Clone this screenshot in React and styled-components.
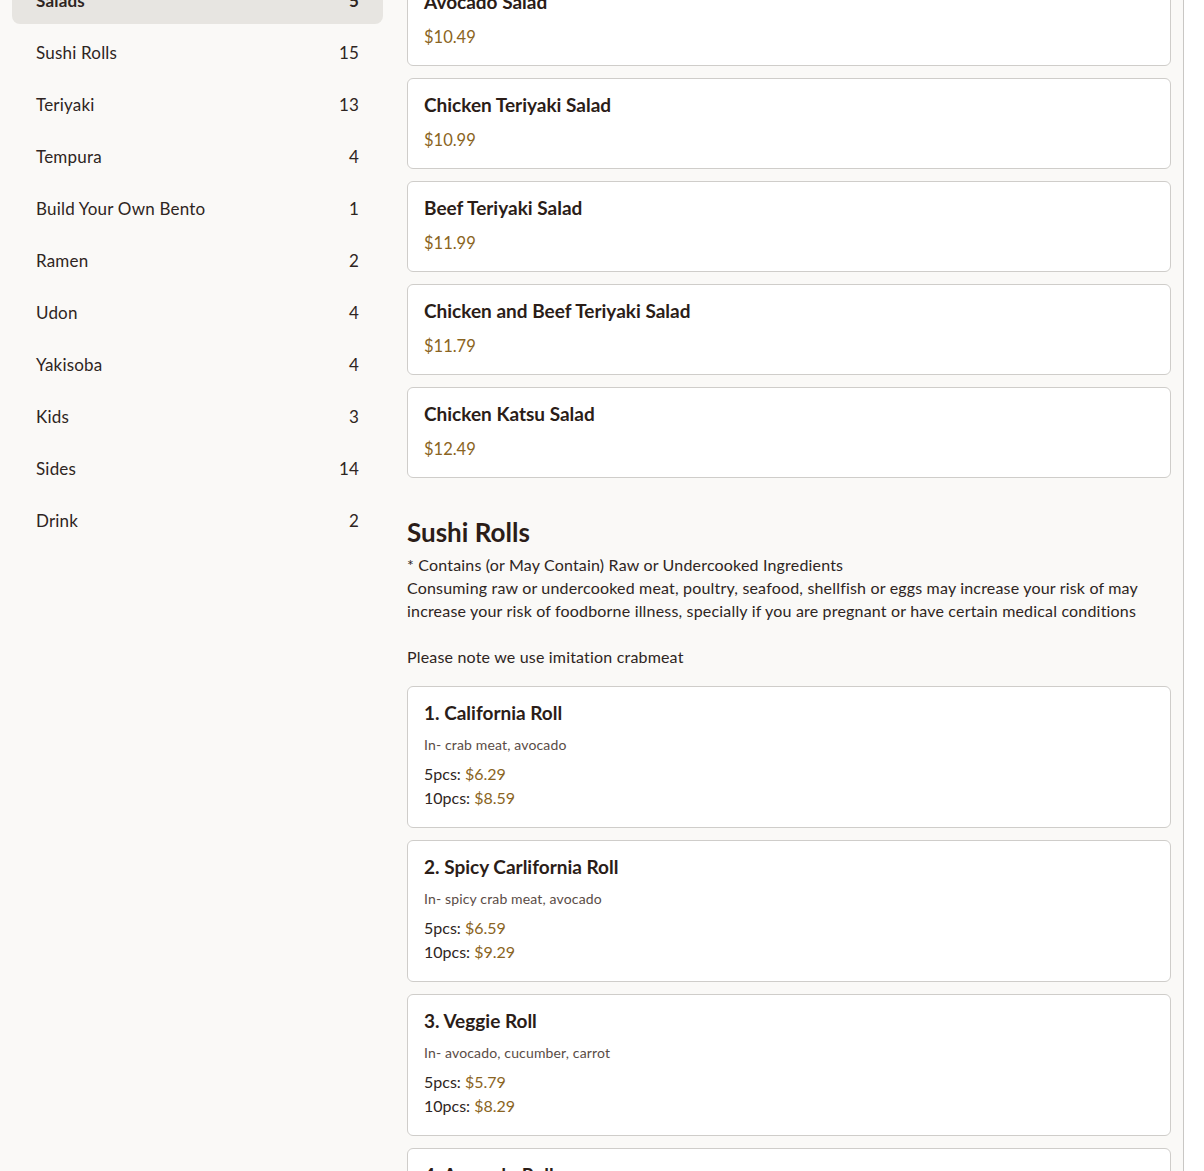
import React from "react";
import styled, { createGlobalStyle } from "styled-components";

const Global = createGlobalStyle`
  html, body { margin: 0; padding: 0; background: #ffffff; }
  body { font-family: "Lato", "Noto Sans", sans-serif; color: #2b211d; overflow: hidden; }
  * { box-sizing: border-box; }
`;

const Page = styled.div`
  width: 1184px;
  height: 1171px;
  overflow: hidden;
  background: #faf9f7;
  border-right: 1px solid #c9c7c4;
`;

const Layout = styled.div`
  display: grid;
  grid-template-columns: 371px 1fr;
  gap: 24px;
  padding: 0 12px 12px 12px;
  margin-top: -24px;
  align-items: start;
`;

const Sidebar = styled.nav`
  display: flex;
  flex-direction: column;
  gap: 4px;
`;

const NavItem = styled.div`
  display: flex;
  align-items: center;
  justify-content: space-between;
  height: 48px;
  padding: 0 24px;
  border-radius: 8px;
  font-size: 17px;
  letter-spacing: 0.2px;
  background: ${(p) => (p.$active ? "#e7e5e1" : "transparent")};
  font-weight: ${(p) => (p.$active ? 700 : 400)};
  color: #2e2522;
`;

const Content = styled.main`
  display: flex;
  flex-direction: column;
  gap: 39px;
  margin-top: -1px;
`;

const Section = styled.section`
  display: flex;
  flex-direction: column;
`;

const SectionTitle = styled.h2`
  margin: 0 0 6px 0;
  font-size: 26px;
  line-height: 30px;
  font-weight: 700;
  color: #2b1d18;
`;

const SectionNote = styled.p`
  margin: 0 0 18px 0;
  font-size: 16px;
  letter-spacing: 0.18px;
  line-height: 23px;
  white-space: pre-line;
  color: #2e2522;
`;

const Cards = styled.div`
  display: flex;
  flex-direction: column;
  gap: 12px;
`;

const Card = styled.div`
  background: #ffffff;
  border: 1px solid #cfcdca;
  border-radius: 6px;
  padding: ${(p) => (p.$tall ? "16px 16px 17px" : "16px")};
  display: flex;
  flex-direction: column;
`;

const ItemName = styled.div`
  font-size: 19px;
  line-height: 22px;
  font-weight: 700;
  color: #2b1d18;
  margin: -1px 0 12px 0;
`;

const ItemDesc = styled.div`
  font-size: 14px;
  letter-spacing: 0.15px;
  line-height: 20px;
  color: #5a4c46;
  margin: -1px 0 7px 0;
`;

const Price = styled.span`
  font-size: 16.5px;
  line-height: 24px;
  color: #8a6422;
`;

const PriceLine = styled.div`
  font-size: 16px;
  line-height: 24px;
  color: #2e2522;

  ${Price} {
    font-size: 16px;
  }
`;

const categories = [
  ["Salads", 5, true],
  ["Sushi Rolls", 15],
  ["Teriyaki", 13],
  ["Tempura", 4],
  ["Build Your Own Bento", 1],
  ["Ramen", 2],
  ["Udon", 4],
  ["Yakisoba", 4],
  ["Kids", 3],
  ["Sides", 14],
  ["Drink", 2],
];

const salads = [
  ["Avocado Salad", "$10.49"],
  ["Chicken Teriyaki Salad", "$10.99"],
  ["Beef Teriyaki Salad", "$11.99"],
  ["Chicken and Beef Teriyaki Salad", "$11.79"],
  ["Chicken Katsu Salad", "$12.49"],
];

const rolls = [
  ["1. California Roll", "In- crab meat, avocado", "$6.29", "$8.59"],
  ["2. Spicy Carlifornia Roll", "In- spicy crab meat, avocado", "$6.59", "$9.29"],
  ["3. Veggie Roll", "In- avocado, cucumber, carrot", "$5.79", "$8.29"],
  ["4. Avocado Roll", "In- avocado", "$5.79", "$8.29"],
];

export default function App() {
  return (
    <>
      <Global />
      <Page>
        <Layout>
          <Sidebar>
            {categories.map(([name, count, active]) => (
              <NavItem key={name} $active={active}>
                <span>{name}</span>
                <span>{count}</span>
              </NavItem>
            ))}
          </Sidebar>
          <Content>
            <Section>
              <Cards>
                {salads.map(([name, price]) => (
                  <Card key={name}>
                    <ItemName>{name}</ItemName>
                    <Price>{price}</Price>
                  </Card>
                ))}
              </Cards>
            </Section>
            <Section>
              <SectionTitle>Sushi Rolls</SectionTitle>
              <SectionNote>
                {"* Contains (or May Contain) Raw or Undercooked Ingredients\nConsuming raw or undercooked meat, poultry, seafood, shellfish or eggs may increase your risk of may increase your risk of foodborne illness, specially if you are pregnant or have certain medical conditions\n\nPlease note we use imitation crabmeat"}
              </SectionNote>
              <Cards>
                {rolls.map(([name, desc, p5, p10]) => (
                  <Card key={name} $tall>
                    <ItemName>{name}</ItemName>
                    <ItemDesc>{desc}</ItemDesc>
                    <PriceLine>
                      5pcs: <Price>{p5}</Price>
                    </PriceLine>
                    <PriceLine>
                      10pcs: <Price>{p10}</Price>
                    </PriceLine>
                  </Card>
                ))}
              </Cards>
            </Section>
          </Content>
        </Layout>
      </Page>
    </>
  );
}
